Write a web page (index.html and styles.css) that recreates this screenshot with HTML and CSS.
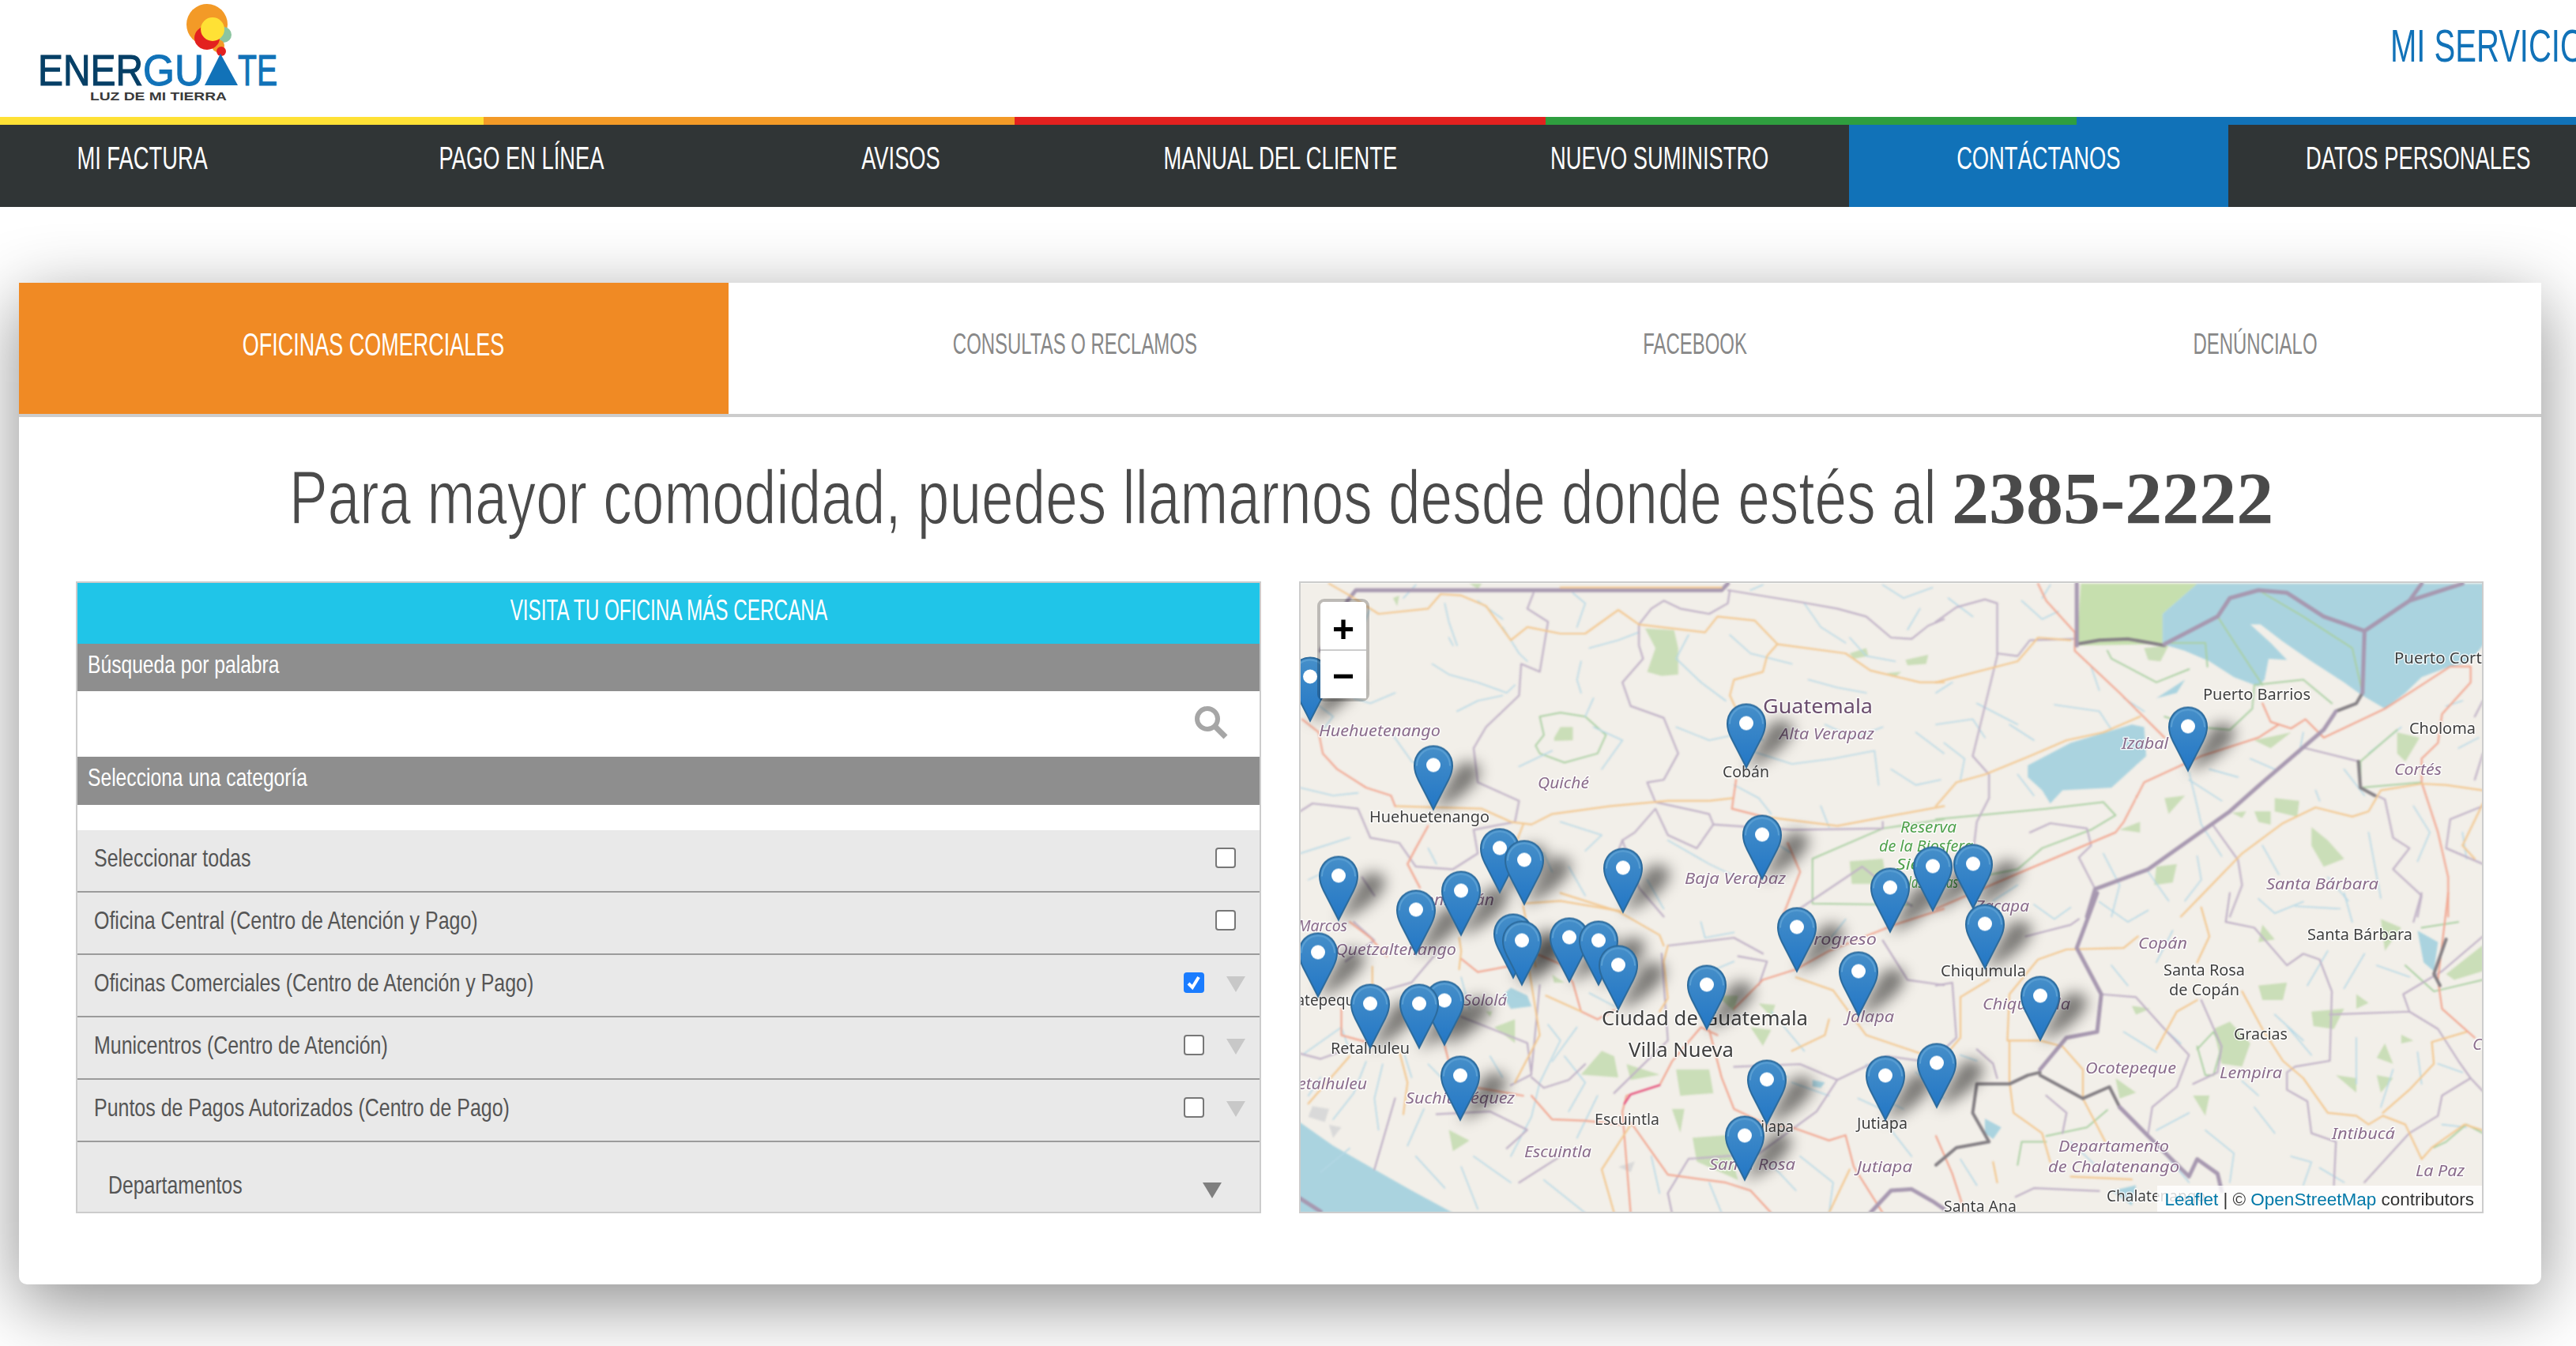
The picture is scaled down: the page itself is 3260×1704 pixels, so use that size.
FILE: index.html
```html
<!DOCTYPE html>
<html lang="es">
<head>
<meta charset="utf-8">
<title>Energuate - Contáctanos</title>
<link rel="stylesheet" href="styles.css">
</head>
<body>
<header class="top">
  <svg class="logo" viewBox="51 0 310 148" width="310" height="148" role="img" aria-label="Energuate">
    <ellipse cx="262" cy="31" rx="26" ry="26" fill="#f39a27"/>
    <ellipse cx="283" cy="44" rx="10" ry="10" fill="#8cc5a0"/>
    <ellipse cx="276" cy="58" rx="8" ry="8" fill="#f39a27"/>
    <ellipse cx="262" cy="48" rx="16" ry="15" fill="#e3211f"/>
    <ellipse cx="269" cy="37" rx="15" ry="15" fill="#ffe135"/>
    <ellipse cx="280" cy="65" rx="6" ry="6" fill="#e3211f"/>
    <text class="logo-a" x="48" y="108" textLength="133" lengthAdjust="spacingAndGlyphs">ENER</text>
    <text class="logo-b" x="181" y="108" textLength="77" lengthAdjust="spacingAndGlyphs">GU</text>
    <polygon points="279,68 259,108 301,108" fill="#1172b8"/>
    <text class="logo-b" x="301" y="108" textLength="50" lengthAdjust="spacingAndGlyphs">TE</text>
    <text class="logo-c" x="114" y="127" textLength="173" lengthAdjust="spacingAndGlyphs">LUZ DE MI TIERRA</text>
  </svg>
  <span class="service"><span class="cond">MI SERVICIOS</span></span>
</header>

<div class="strip">
  <i class="s-yellow"></i><i class="s-orange"></i><i class="s-red"></i><i class="s-green"></i><i class="s-blue"></i>
</div>
<nav class="nav">
  <a class="nav-item"><span class="cond center">MI FACTURA</span></a>
  <a class="nav-item"><span class="cond center">PAGO EN LÍNEA</span></a>
  <a class="nav-item"><span class="cond center">AVISOS</span></a>
  <a class="nav-item"><span class="cond center">MANUAL DEL CLIENTE</span></a>
  <a class="nav-item"><span class="cond center">NUEVO SUMINISTRO</span></a>
  <a class="nav-item active"><span class="cond center">CONTÁCTANOS</span></a>
  <a class="nav-item"><span class="cond center">DATOS PERSONALES</span></a>
</nav>

<main class="panel">
  <div class="tabs">
    <a class="tab tab-1"><span class="cond center">OFICINAS COMERCIALES</span></a>
    <a class="tab tab-2"><span class="cond center">CONSULTAS O RECLAMOS</span></a>
    <a class="tab tab-3"><span class="cond center">FACEBOOK</span></a>
    <a class="tab tab-4"><span class="cond center">DENÚNCIALO</span></a>
  </div>

  <h1 class="headline"><span class="lead-box"><span class="lead cond">Para mayor comodidad, puedes llamarnos desde donde estés al</span></span><b class="phone">2385-2222</b></h1>

  <div class="content">
    <section class="side">
      <div class="side-title"><span class="cond center">VISITA TU OFICINA MÁS CERCANA</span></div>
      <div class="side-label l-a"><span class="cond">Búsqueda por palabra</span></div>
      <div class="search">
        <input class="search-input" type="text" aria-label="Búsqueda por palabra">
        <svg class="search-icon" viewBox="0 0 46 46" width="46" height="46"><circle cx="19" cy="19" r="13" fill="none" stroke="#a6a6a6" stroke-width="6"/><path d="M28 28 L42 42" stroke="#a6a6a6" stroke-width="7" fill="none"/></svg>
      </div>
      <div class="side-label l-b"><span class="cond">Selecciona una categoría</span></div>
      <div class="gap"></div>
      <div class="row"><span class="cond">Seleccionar todas</span><span class="cb"></span></div>
      <div class="row"><span class="cond">Oficina Central (Centro de Atención y Pago)</span><span class="cb"></span></div>
      <div class="row has-tri"><span class="cond">Oficinas Comerciales (Centro de Atención y Pago)</span><span class="cb on"><svg viewBox="0 0 26 26" width="26" height="26"><path d="M6 14 L11 19 L19 6" fill="none" stroke="#fff" stroke-width="4"/></svg></span><span class="tri"></span></div>
      <div class="row has-tri"><span class="cond">Municentros (Centro de Atención)</span><span class="cb"></span><span class="tri"></span></div>
      <div class="row has-tri"><span class="cond">Puntos de Pagos Autorizados (Centro de Pago)</span><span class="cb"></span><span class="tri"></span></div>
      <div class="row-last"><span class="cond">Departamentos</span><span class="tri dark"></span></div>
    </section>

    <section class="map">
      <svg class="map-svg" viewBox="1646 738 1495 795" width="1495" height="796">
        <defs>
          <linearGradient id="pg" x1="0" y1="0" x2="0" y2="1"><stop offset="0" stop-color="#468fc9"/><stop offset="1" stop-color="#2377c6"/></linearGradient>
          <symbol id="pin" viewBox="0 0 50 82" overflow="visible">
            <path d="M25 1 C11 1 1 12 1 26 C1 33 3 38 6 44 L25 81 L44 44 C47 38 49 33 49 26 C49 12 39 1 25 1 Z" fill="url(#pg)" stroke="#2b6a9c" stroke-width="2"/>
            <path d="M25 4 C13 4 4 14 4 26" fill="none" stroke="#5a9fd3" stroke-width="2"/>
            <path d="M25 4 C37 4 46 14 46 26" fill="none" stroke="#5a9fd3" stroke-width="2"/>
            <circle cx="25" cy="25" r="9" fill="#fff"/>
          </symbol>
          <symbol id="sh" viewBox="0 -70 70 72" overflow="visible">
            <path d="M0 0 L28 -52 C36 -66 64 -62 58 -44 C52 -28 22 -6 0 0 Z" fill="#000" fill-opacity=".5"/>
          </symbol>
        </defs>

        <rect x="1646" y="738" width="1495" height="796" fill="#f2efe9"/>

        <g class="tiles">
          <!-- north-west quadrant -->
          <g transform="translate(1640 720) scale(.523 .3333)">
            <path class="wood" d="M845 225 L915 232 L925 300 L925 400 L885 405 L850 390 L870 300 Z"/>
            <path class="wood" d="M625 640 L640 600 L670 600 L670 650 L625 652 Z"/>
            <path class="wood" d="M1340 320 L1380 300 L1385 330 L1350 340 Z M1475 345 L1530 325 L1525 360 L1480 365 Z M1430 395 L1465 390 L1450 410 Z M235 110 L250 100 L245 140 Z M420 55 L450 55 L440 75 Z M1340 1110 L1420 1100 L1430 1195 L1345 1195 Z"/>
            <path class="prot" d="M590 560 L640 545 L700 560 L750 630 L730 700 L650 735 L590 700 L580 670 L600 630 Z"/>
            <path class="prot" d="M1568 950 L1420 985 L1250 1100 L1250 1270 L1490 1275"/>
            <path class="riv" d="M330 360 L370 400 L440 430 L510 470 L530 440 M240 470 L180 510 L140 490 M390 540 L440 500 L500 480 M690 350 L680 420 L690 470 M720 490 L700 560 M540 750 L620 690 M740 760 L790 650 L720 600 M920 600 L1000 650 L1060 630 M1200 740 L1300 720 L1400 690 L1410 820 M1240 420 L1310 450 L1380 470 M1270 900 L1290 980 M260 110 L290 60 M370 260 L380 290 M500 220 L540 320 L560 350 M710 300 L780 270 L830 240 M950 250 L920 340 L980 430 L1040 500 M1060 820 L1120 870 L1150 930 M1420 60 L1470 110 L1540 70 M1340 260 L1380 330 L1450 350 M1100 690 L1200 740 M1500 620 L1568 700 M700 1070 L740 1010 L640 960 M130 1020 L50 1060 L10 1080 M320 1060 L340 1120 M900 1030 L1000 1120 L1080 1180 M10 830 L90 860 L150 850 M1100 80 L1130 60 M660 1130 L700 1240 M850 1180 L890 1290 M180 150 L150 260 L100 330 M360 130 L370 200 L390 290 M670 90 L700 130 L680 220 M1050 250 L1100 320 L1200 360 M1230 130 L1270 220 L1330 280 M1510 150 L1480 230 M40 500 L90 560 L60 620 M230 620 L280 730 L340 770 M440 120 L500 190 M1280 590 L1350 640 L1420 600 M1090 610 L1130 650 M1440 760 L1500 820 L1560 800 M1120 1000 L1200 1080 M480 1010 L600 1080 L620 1150 M30 1180 L110 1120"/>
            <path class="dep" d="M1045 80 L1220 125 L1310 150 L1380 180 L1440 260 L1490 265 L1530 215 L1568 190"/>
            <path class="dep" d="M1050 80 L1045 130 L1000 170 L930 150 L890 120 L860 150 L830 210 L830 290 L840 340 L790 430 L810 520 L890 565 L925 700 L890 800 L850 810 L870 885 L1000 930 L1010 970 L970 1060 L900 1010 L870 910 L820 1000 L790 1030 L780 1070"/>
            <path class="dep" d="M575 90 L560 150 L610 200 L590 390 L545 360 L540 480 L460 600 L430 680 L440 810 L540 880 L530 960 L430 990 L440 1080 L380 1140 L290 1130 L250 1040 L180 1020 L150 910 L40 890 L10 920"/>
            <path class="dep" d="M1010 970 L1200 990 L1420 985 L1420 960 M790 1030 L830 1210 L890 1320 M160 1170 L190 1240 M1200 1310 L1370 1130 L1490 1280"/>
            <path class="nat" d="M125 120 L145 80 L1030 80 L1045 55 M125 120 L60 310"/>
            <path class="rdo" d="M80 55 L130 100 L200 170 L320 150 L350 95 L400 100 L460 140 L520 270 L560 220 L640 245 L700 245 L780 155 L830 210 L990 240 L1020 180 L1110 195 L1165 285 L1330 320 L1390 385 L1510 430 L1568 430"/>
            <path class="rdo" d="M1165 285 L1140 330 L1130 390 L1060 420 L1050 480 L1065 530"/>
            <path class="rdo" d="M240 900 L450 910 L520 960 L570 970 L620 930 L760 900 L900 880 L1000 880 L1055 870 M1130 940 L1310 975 L1430 940 L1568 900 M640 70 L1030 70 M550 970 L520 1090 M550 1270 L640 1260 L790 1300"/>
            <path class="rdr" d="M15 570 L55 620 L65 700 L100 760 L170 830 L230 860 L240 900"/>
            <path class="rdr" d="M1065 800 L1055 910 L1130 940 M320 975 L290 1060 L270 1120 L300 1210 M1190 1040 L1220 1150 L1180 1310"/>
          </g>
          <!-- south-west quadrant -->
          <g transform="translate(1640 1130) scale(.523 .3333)">
            <path class="wat" d="M0 860 L90 960 L190 1050 L280 1130 L380 1215 L0 1215 Z"/>
            <path class="wat" d="M520 360 L560 390 L570 430 L520 440 L500 390 Z M1250 710 L1280 720 L1270 740 L1250 735 Z"/>
            <path class="wood" d="M740 600 L770 620 L780 700 L690 690 Z M800 650 L880 690 L810 710 Z M920 670 L1000 670 L1010 760 L930 770 Z M960 930 L1040 920 L1070 1090 L970 1020 Z M480 510 L530 480 L530 570 Z M1020 390 L1070 390 L1060 450 Z M1120 420 L1160 425 L1150 470 Z M1100 510 L1150 520 L1130 580 Z M460 450 L475 450 L470 470 Z M620 310 L650 340 L625 340 Z M910 820 L940 820 L930 910 Z M370 900 L420 940 L380 980 Z"/>
            <path class="rock" d="M40 810 L80 820 L70 870 L30 850 Z M80 880 L110 890 L90 930 Z M780 1040 L820 1020 L810 1060 Z"/>
            <path class="riv" d="M20 610 L110 510 L130 600 M170 640 L140 760 L90 860 M260 600 L280 700 M320 650 L370 730 M610 500 L640 560 L590 720 L570 850 L520 1000 M680 510 L620 640 M430 1000 L520 1100 M290 1000 L360 1120 M400 1040 L440 1200 M600 1090 L700 1215 M860 1000 L880 1140 M980 110 L990 170 L1060 150 M1150 450 L1230 600 M1200 720 L1290 770 M1360 780 L1430 830 M1500 680 L1568 780 M1220 1000 L1300 1100 L1290 1215 M1000 1100 L1030 1215 M130 970 L60 1060 M710 380 L770 430 M400 320 L420 440 M210 650 L190 780 L200 900 M310 820 L270 960 M470 620 L500 700 M650 620 L700 720 L660 830 M730 770 L680 930 M1130 640 L1190 700 M1380 650 L1400 770 L1470 820 M1150 1030 L1210 1130 M1440 900 L1490 1000 M60 700 L30 770 M1060 260 L1000 300 L1010 380 M1330 100 L1290 180"/>
            <path class="dep" d="M10 610 L60 630 L130 590 M400 470 L560 570 L570 690 L520 730 M240 780 L190 1050 M340 840 L470 830 L560 900 L510 970 M590 350 L570 680 M900 200 L1060 170 L1130 230 M885 230 L900 560 L770 760 M700 650 L660 710 L600 740 L570 700 M1060 660 L1220 650 L1310 710 L1430 620 L1568 650 M1310 710 L1260 830 L1120 990 L950 1010 L900 1140 L910 1215 M1420 180 L1480 330 L1568 350 M140 110 L190 180 L120 260 M350 210 L280 340 L190 380 M1070 240 L1140 260 L1120 350 M540 1100 L640 1000"/>
            <path class="rdr" d="M400 250 L440 300 L510 280 L580 230 L640 270 L670 340 L690 450 L730 480 L770 445 M1020 540 L980 510 L910 640 L880 730 L800 770 L790 830 L810 1215 M810 870 L900 1070 L1040 1100 L1100 1130 L1150 1215 M1000 520 L1030 700 L1060 820 L1140 880 L1200 890 L1290 940 L1330 920 L1350 1040 L1420 1215 M1060 440 L1130 330 L1210 290 L1290 220 L1450 120 L1568 60 M570 770 L620 860 L700 865 L790 880 M440 740 L550 770 M110 440 L110 540 L180 570 M130 110 L180 170 L220 240 M360 580 L370 640"/>
            <path class="rdo" d="M550 50 L580 280 M395 170 L400 220 L395 290 M185 280 L185 350 M605 390 L690 450 M900 200 L890 260 L900 400 L880 450 M1210 320 L1300 370 L1380 540 L1568 640 M1200 600 L1280 540 L1290 480 M770 1215 L740 1050 L810 880 M1290 1215 L1340 1050 M560 250 L590 540 L530 720 M130 620 L30 800 M250 600 L270 720 L260 840 M640 0 L780 70 L880 160 L890 200"/>
            <path class="pink" d="M795 800 L810 765 L880 730"/>
            <path class="nat" d="M1390 1215 L1440 1130 L1490 1125 L1540 1170 L1568 1200 M10 1160 L60 1210"/>
          </g>
          <!-- north-east quadrant -->
          <g transform="translate(2450 720) scale(.5165 .3333)">
            <path class="wood-l" d="M355 55 L640 55 L555 170 L555 285 L345 290 Z"/>
            <path class="wat" d="M640 55 L555 170 L555 285 L610 310 L670 350 L730 410 L790 445 L805 420 L815 340 L860 345 L820 280 L770 210 L795 210 L850 275 L920 350 L1000 430 L1040 475 L1100 530 L1150 470 L1190 410 L1250 375 L1310 350 L1342 285 L1342 55 Z"/>
            <path class="wat" d="M225 745 L330 660 L480 590 L510 600 L515 710 L430 830 L310 840 L280 890 L260 840 L225 790 Z M540 490 L610 420 L590 470 Z"/>
            <path class="wood" d="M830 870 L890 880 L885 940 L830 920 Z M780 920 L820 920 L820 970 L790 960 Z M725 925 L760 920 L750 945 Z M920 980 L960 1030 L1000 1100 L950 1130 L920 1050 Z M1130 620 L1185 640 L1150 730 L1130 700 Z M540 1130 L590 1120 L580 1190 L535 1200 Z M510 300 L570 290 L550 350 L520 345 Z M780 650 L870 620 L820 680 Z M500 960 L450 990 L500 1000 Z M560 870 L610 860 L570 930 Z"/>
            <path class="riv" d="M0 470 L40 430 M100 510 L200 590 M0 590 L90 570 L120 640 M180 590 L240 650 M290 515 L400 540 L430 610 M460 490 L510 540 M620 770 L640 900 L650 970 L700 1090 M620 800 L700 880 M670 760 L740 790 M770 720 L830 760 M520 1150 L570 1260 M410 1080 L450 1200 L430 1320 M640 1090 L650 1180 L610 1260 M930 840 L940 880 M1140 600 L1060 700 M1290 1000 L1300 1100 M1060 1000 L1090 1250 M880 1280 L990 1290 M140 1260 L200 1200 M1250 520 L1290 500 M280 60 L260 110 M900 620 L890 700 M30 110 L90 180 M210 120 L260 190 L300 160 M20 660 L70 720 L60 800 M380 370 L400 460 M200 780 L240 860 M800 1050 L840 1160 M960 1170 L1010 1260 M1000 760 L1050 860 M1170 900 L1210 1000 L1180 1110 M1280 680 L1330 640"/>
            <path class="prot" d="M690 180 L740 300 L800 440 M790 80 L900 180 L1020 300 L1045 470 M560 280 L660 280 L665 370 M420 310 L430 340 L540 430 L620 380 M560 560 L640 600 L720 610 L775 530 L780 440 L900 420 L970 510 M0 950 L270 910 L410 885 L440 935 L380 990 L260 1060 L230 1100 L200 1140 L100 1170 M1040 730 L1040 830 L1190 810 M1130 610 L1040 730"/>
            <path class="dep" d="M150 130 L150 330 L90 710 L130 780 L130 870 L100 960 L90 1090 M230 1000 L280 965 L370 985 L380 1050 L350 1095 L390 1215 M680 975 L740 1105 L750 1200 L720 1320 M905 680 L1035 730 L1040 830 L1100 875 L1120 1020 L1160 1060 L1120 1140 L1190 1240 L1180 1320 M0 200 L50 145 L120 115 L150 130 M150 320 L200 330 L230 270 L340 265 M1340 500 L1320 560 M1340 700 L1320 800 M1340 900 L1260 950 L1250 1060 L1340 1120"/>
            <path class="rdr" d="M250 55 L270 120 L340 240 L340 310 L450 470 L560 640 M840 590 L790 640 L650 710 L510 810 L460 960 L440 1000 L210 1150 L0 1290 M800 510 L820 580 L870 605 L905 570 L950 640 L1100 530 L1150 480 L1260 370 L1310 370 L1310 430 L1240 550 L1230 660 L1190 720 L1190 810 L1230 1000 L1255 1170 L1255 1320"/>
            <path class="rdo" d="M0 430 L200 350 L250 260 L330 270 M0 900 L50 810 L120 780 L230 710 L320 650 L410 620 L500 560 M1340 840 L1250 820 L1190 815 L1090 840 L1060 920 L1020 940 L930 905 L850 965 L750 1080 L650 1240 L600 1320 M1340 890 L1290 1050 L1320 1100"/>
            <path class="dark" d="M345 285 L400 270 L470 265 L560 290 M1045 470 L1030 510 L980 540 M1035 730 L1040 830 L1075 860"/>
            <path class="nat" d="M345 55 L345 290 M560 285 L690 180 L720 110 L790 80 L860 90 L950 180 L1050 235 L1160 120 L1190 55 M1160 120 L1290 55 M1050 235 L1045 470 M980 540 L950 610 L800 810 L720 920 L520 1140 L390 1215 L370 1320"/>
          </g>
          <!-- south-east quadrant -->
          <g transform="translate(2450 1130) scale(.5165 .3663)">
            <path class="wat" d="M1180 130 L1230 170 L1220 270 L1195 240 Z M120 780 L160 810 L140 850 L120 830 Z M430 1030 L490 1010 L480 1080 Z"/>
            <path class="wood" d="M680 470 L720 445 L770 520 L750 600 L700 590 Z M790 320 L860 310 L850 370 L800 370 Z M920 410 L1000 400 L975 470 L925 460 Z M1250 280 L1340 180 L1340 270 L1270 300 Z M1090 90 L1140 120 L1100 200 Z M1030 350 L1060 380 L1030 400 Z M980 630 L1030 640 L1030 690 Z M1080 630 L1120 640 L1090 690 Z M1100 520 L1120 590 L1080 570 Z M630 700 L670 700 L660 770 Z M480 390 L525 400 L490 420 Z M1140 490 L1170 510 L1140 520 Z M440 640 L490 690 L450 710 Z M800 110 L830 160 L790 170 Z"/>
            <path class="riv" d="M400 30 L470 100 L520 60 M430 250 L470 320 M460 480 L540 550 M560 470 L600 520 M780 740 L830 830 M660 820 L730 900 L720 1000 M540 820 L620 760 M870 910 L920 930 L900 1010 M1030 500 L1030 660 M1050 210 L1000 330 M790 20 L830 70 L900 30 M1000 0 L1020 100 M1180 550 L1190 660 M1240 800 L1300 810 M1080 250 L1160 290 M830 420 L900 510 M1230 590 L1290 620 M60 560 L100 580 M60 920 L100 1010 M960 200 L910 320 M240 40 L290 90 L330 50 M580 130 L540 240 M860 460 L920 560 M1120 610 L1090 740 M750 650 L790 700 M330 860 L390 940 M940 950 L1000 1000 M210 400 L270 450 M560 900 L620 1000"/>
            <path class="prot" d="M640 540 L680 480 L700 530 L680 630 L660 630 L640 530 M1150 250 L1220 340 L1340 300 M1190 120 L1280 100 M270 860 L210 860 L200 940 M270 840 L370 810 L420 750 M1340 830 L1300 800 L1250 860 L1220 880"/>
            <path class="dep" d="M710 100 L780 120 L860 250 L900 210 L940 230 L970 340 L965 580 L880 600 L860 620 L860 680 L910 720 L920 830 L980 860 L975 1010 M965 420 L1160 410 L1230 470 L1280 580 L1310 640 L1240 700 L1230 770 L1160 830 L1050 1000 M1160 410 L1145 350 L1240 270 L1340 150 M405 350 L490 360 L560 470 L620 560 L590 670 L530 740 L520 830 M1310 640 L1340 685 M630 660 L690 620 L700 530 L650 370 M220 150 L330 110 L350 90 M0 320 L40 310 L50 500 L20 540 M100 540 L140 590 L150 640 M195 1050 L240 1020 L400 1030 M270 700 L320 760 L310 830 M710 100 L720 0 M1190 0 L1170 100"/>
            <path class="rdo" d="M650 50 L670 150 L640 240 M495 150 L460 190 L320 195 L250 230 L180 350 L175 510 L255 510 L310 530 L360 610 L360 710 L415 860 M180 510 L180 650 L190 760 L260 830 L280 930 M640 370 L590 410 L540 540 M750 340 L800 470 L850 580 L900 640 L960 760 L1030 770 L1060 800 L1095 770 L1150 800 L1190 920 L1215 880 L1295 800 L1340 820 M1095 760 L1160 680 L1220 590 L1215 515 L1300 480 M60 360 L130 300 M330 980 L480 990 M140 930 L150 1000 M60 360 L60 500 L0 600"/>
            <path class="rdr" d="M1255 0 L1230 300 L1240 400 L1320 500 M0 840 L40 970 L70 1100"/>
            <path class="dark" d="M255 620 L225 630 L180 660 L100 660 L90 760 L130 860 L50 880 L0 940 M255 630 L360 710 L425 670 L450 740 M1250 160 L1220 280 L1235 320"/>
            <path class="nat" d="M395 0 L345 190 L405 350 L395 480 L320 500 L255 610 M450 740 L520 840 L620 980 L640 920 L690 970 L700 1030"/>
          </g>
        </g>

        <g class="labels">
          <text class="lc big" x="2231" y="902" textLength="139" lengthAdjust="spacingAndGlyphs">Guatemala</text>
          <text class="li" x="2252" y="935" textLength="120" lengthAdjust="spacingAndGlyphs">Alta Verapaz</text>
          <text class="li" x="1669" y="931" textLength="154" lengthAdjust="spacingAndGlyphs">Huehuetenango</text>
          <text class="lr" x="1733" y="1040" textLength="152" lengthAdjust="spacingAndGlyphs">Huehuetenango</text>
          <text class="li" x="1946" y="997" textLength="65" lengthAdjust="spacingAndGlyphs">Quiché</text>
          <text class="lr" x="2180" y="983" textLength="59" lengthAdjust="spacingAndGlyphs">Cobán</text>
          <text class="lg" x="2405" y="1053" textLength="71" lengthAdjust="spacingAndGlyphs">Reserva</text>
          <text class="lg" x="2378" y="1077" textLength="119" lengthAdjust="spacingAndGlyphs">de la Biosfera</text>
          <text class="lg" x="2400" y="1100" textLength="60" lengthAdjust="spacingAndGlyphs">Sierra</text>
          <text class="lg" x="2395" y="1123" textLength="83" lengthAdjust="spacingAndGlyphs">de las Minas</text>
          <text class="li" x="2132" y="1118" textLength="128" lengthAdjust="spacingAndGlyphs">Baja Verapaz</text>
          <text class="li" x="1775" y="1145" textLength="116" lengthAdjust="spacingAndGlyphs">Totonicapán</text>
          <text class="li" x="1605" y="1178" textLength="100" lengthAdjust="spacingAndGlyphs">San Marcos</text>
          <text class="li" x="1690" y="1208" textLength="153" lengthAdjust="spacingAndGlyphs">Quetzaltenango</text>
          <text class="li" x="2282" y="1195" textLength="93" lengthAdjust="spacingAndGlyphs">Progreso</text>
          <text class="lr" x="1617" y="1272" textLength="108" lengthAdjust="spacingAndGlyphs">Coatepeque</text>
          <text class="li" x="1852" y="1272" textLength="55" lengthAdjust="spacingAndGlyphs">Sololá</text>
          <text class="lr" x="1684" y="1333" textLength="100" lengthAdjust="spacingAndGlyphs">Retalhuleu</text>
          <text class="li" x="1630" y="1378" textLength="100" lengthAdjust="spacingAndGlyphs">Retalhuleu</text>
          <text class="li" x="1779" y="1396" textLength="138" lengthAdjust="spacingAndGlyphs">Suchitepéquez</text>
          <text class="lr xl" x="2027" y="1297" textLength="261" lengthAdjust="spacingAndGlyphs">Ciudad de Guatemala</text>
          <text class="lr xl" x="2061" y="1337" textLength="133" lengthAdjust="spacingAndGlyphs">Villa Nueva</text>
          <text class="li" x="2336" y="1293" textLength="61" lengthAdjust="spacingAndGlyphs">Jalapa</text>
          <text class="lr" x="2018" y="1423" textLength="82" lengthAdjust="spacingAndGlyphs">Escuintla</text>
          <text class="li" x="1929" y="1464" textLength="85" lengthAdjust="spacingAndGlyphs">Escuintla</text>
          <text class="lr" x="2205" y="1432" textLength="65" lengthAdjust="spacingAndGlyphs">Cuilapa</text>
          <text class="li" x="2163" y="1480" textLength="109" lengthAdjust="spacingAndGlyphs">Santa Rosa</text>
          <text class="lr" x="2350" y="1428" textLength="64" lengthAdjust="spacingAndGlyphs">Jutiapa</text>
          <text class="li" x="2350" y="1483" textLength="70" lengthAdjust="spacingAndGlyphs">Jutiapa</text>
          <text class="lr" x="3030" y="839" textLength="132" lengthAdjust="spacingAndGlyphs">Puerto Cortés</text>
          <text class="lr" x="2788" y="885" textLength="136" lengthAdjust="spacingAndGlyphs">Puerto Barrios</text>
          <text class="lr" x="3049" y="928" textLength="84" lengthAdjust="spacingAndGlyphs">Choloma</text>
          <text class="li" x="2685" y="947" textLength="59" lengthAdjust="spacingAndGlyphs">Izabal</text>
          <text class="li" x="3030" y="980" textLength="60" lengthAdjust="spacingAndGlyphs">Cortés</text>
          <text class="li" x="2868" y="1125" textLength="142" lengthAdjust="spacingAndGlyphs">Santa Bárbara</text>
          <text class="li" x="2500" y="1153" textLength="68" lengthAdjust="spacingAndGlyphs">Zacapa</text>
          <text class="lr" x="2920" y="1189" textLength="133" lengthAdjust="spacingAndGlyphs">Santa Bárbara</text>
          <text class="li" x="2706" y="1200" textLength="62" lengthAdjust="spacingAndGlyphs">Copán</text>
          <text class="lr" x="2738" y="1234" textLength="103" lengthAdjust="spacingAndGlyphs">Santa Rosa</text>
          <text class="lr" x="2745" y="1259" textLength="89" lengthAdjust="spacingAndGlyphs">de Copán</text>
          <text class="lr" x="2456" y="1235" textLength="108" lengthAdjust="spacingAndGlyphs">Chiquimula</text>
          <text class="li" x="2509" y="1277" textLength="111" lengthAdjust="spacingAndGlyphs">Chiquimula</text>
          <text class="lr" x="2827" y="1315" textLength="68" lengthAdjust="spacingAndGlyphs">Gracias</text>
          <text class="li" x="2639" y="1358" textLength="115" lengthAdjust="spacingAndGlyphs">Ocotepeque</text>
          <text class="li" x="2809" y="1364" textLength="79" lengthAdjust="spacingAndGlyphs">Lempira</text>
          <text class="li" x="2951" y="1441" textLength="80" lengthAdjust="spacingAndGlyphs">Intibucá</text>
          <text class="li" x="2605" y="1457" textLength="140" lengthAdjust="spacingAndGlyphs">Departamento</text>
          <text class="li" x="2592" y="1483" textLength="166" lengthAdjust="spacingAndGlyphs">de Chalatenango</text>
          <text class="li" x="3057" y="1488" textLength="62" lengthAdjust="spacingAndGlyphs">La Paz</text>
          <text class="lr" x="2666" y="1520" textLength="125" lengthAdjust="spacingAndGlyphs">Chalatenango</text>
          <text class="lr" x="2460" y="1533" textLength="92" lengthAdjust="spacingAndGlyphs">Santa Ana</text>
          <text class="li" x="3129" y="1328" textLength="110" lengthAdjust="spacingAndGlyphs">Comayagua</text>
        </g>

        <g class="shadows">
          <use href="#sh" x="1658" y="843" width="70" height="72"/><use href="#sh" x="2769" y="906" width="70" height="72"/>
          <use href="#sh" x="2210" y="902" width="70" height="72"/><use href="#sh" x="1814" y="955" width="70" height="72"/>
          <use href="#sh" x="2230" y="1043" width="70" height="72"/><use href="#sh" x="1898" y="1060" width="70" height="72"/>
          <use href="#sh" x="1929" y="1075" width="70" height="72"/><use href="#sh" x="2446" y="1083" width="70" height="72"/>
          <use href="#sh" x="2497" y="1080" width="70" height="72"/><use href="#sh" x="2054" y="1085" width="70" height="72"/>
          <use href="#sh" x="1694" y="1095" width="70" height="72"/><use href="#sh" x="2392" y="1110" width="70" height="72"/>
          <use href="#sh" x="1849" y="1114" width="70" height="72"/><use href="#sh" x="1792" y="1138" width="70" height="72"/>
          <use href="#sh" x="2512" y="1156" width="70" height="72"/><use href="#sh" x="2274" y="1160" width="70" height="72"/>
          <use href="#sh" x="1915" y="1168" width="70" height="72"/><use href="#sh" x="1986" y="1173" width="70" height="72"/>
          <use href="#sh" x="1926" y="1177" width="70" height="72"/><use href="#sh" x="2023" y="1177" width="70" height="72"/>
          <use href="#sh" x="1668" y="1192" width="70" height="72"/><use href="#sh" x="2048" y="1208" width="70" height="72"/>
          <use href="#sh" x="2352" y="1216" width="70" height="72"/><use href="#sh" x="2160" y="1233" width="70" height="72"/>
          <use href="#sh" x="2582" y="1247" width="70" height="72"/><use href="#sh" x="1828" y="1253" width="70" height="72"/>
          <use href="#sh" x="1734" y="1257" width="70" height="72"/><use href="#sh" x="1796" y="1257" width="70" height="72"/>
          <use href="#sh" x="2451" y="1332" width="70" height="72"/><use href="#sh" x="2386" y="1348" width="70" height="72"/>
          <use href="#sh" x="1848" y="1348" width="70" height="72"/><use href="#sh" x="2236" y="1353" width="70" height="72"/>
          <use href="#sh" x="2208" y="1424" width="70" height="72"/>
        </g>

        <g class="pins">
          <use href="#pin" x="1633" y="831" width="50" height="82"/>
          <use href="#pin" x="2744" y="894" width="50" height="82"/>
          <use href="#pin" x="2185" y="890" width="50" height="82"/>
          <use href="#pin" x="1789" y="943" width="50" height="82"/>
          <use href="#pin" x="2205" y="1031" width="50" height="82"/>
          <use href="#pin" x="1873" y="1048" width="50" height="82"/>
          <use href="#pin" x="1904" y="1063" width="50" height="82"/>
          <use href="#pin" x="2472" y="1068" width="50" height="82"/>
          <use href="#pin" x="2421" y="1071" width="50" height="82"/>
          <use href="#pin" x="2029" y="1073" width="50" height="82"/>
          <use href="#pin" x="1669" y="1083" width="50" height="82"/>
          <use href="#pin" x="2367" y="1098" width="50" height="82"/>
          <use href="#pin" x="1824" y="1102" width="50" height="82"/>
          <use href="#pin" x="1767" y="1126" width="50" height="82"/>
          <use href="#pin" x="2487" y="1144" width="50" height="82"/>
          <use href="#pin" x="2249" y="1148" width="50" height="82"/>
          <use href="#pin" x="1890" y="1156" width="50" height="82"/>
          <use href="#pin" x="1961" y="1161" width="50" height="82"/>
          <use href="#pin" x="1901" y="1165" width="50" height="82"/>
          <use href="#pin" x="1998" y="1165" width="50" height="82"/>
          <use href="#pin" x="1643" y="1180" width="50" height="82"/>
          <use href="#pin" x="2023" y="1196" width="50" height="82"/>
          <use href="#pin" x="2327" y="1204" width="50" height="82"/>
          <use href="#pin" x="2135" y="1221" width="50" height="82"/>
          <use href="#pin" x="2557" y="1235" width="50" height="82"/>
          <use href="#pin" x="1803" y="1241" width="50" height="82"/>
          <use href="#pin" x="1709" y="1245" width="50" height="82"/>
          <use href="#pin" x="1771" y="1245" width="50" height="82"/>
          <use href="#pin" x="2426" y="1320" width="50" height="82"/>
          <use href="#pin" x="2361" y="1336" width="50" height="82"/>
          <use href="#pin" x="1823" y="1336" width="50" height="82"/>
          <use href="#pin" x="2211" y="1341" width="50" height="82"/>
          <use href="#pin" x="2183" y="1412" width="50" height="82"/>
        </g>
      </svg>

      <div class="zoom">
        <a class="zoom-btn zoom-in">+</a>
        <a class="zoom-btn">−</a>
      </div>
      <div class="attrib"><a>Leaflet</a> | © <a>OpenStreetMap</a> contributors</div>
    </section>
  </div>
</main>
</body>
</html>
```

FILE: styles.css
```css
* { box-sizing: border-box; }
html, body { margin: 0; height: 1704px; overflow: hidden; }
body { width: 3260px; background: #fff; font-family: "Liberation Sans", Arial, sans-serif; color: #555; }

.cond { display: inline-block; white-space: nowrap; transform-origin: left center; transform: scaleX(var(--sx, .77)); }
.cond.center { transform-origin: center; }

/* header */
.top { height: 148px; display: flex; align-items: center; padding-left: 51px; white-space: nowrap; }
.logo { display: block; flex: none; }
.logo-a, .logo-b { font-family: "Liberation Sans", sans-serif; font-size: 56px; stroke-width: 1.2px; }
.logo-a { fill: #063f66; stroke: #063f66; }
.logo-b { fill: #1172b8; stroke: #1172b8; }
.logo-c { font-family: "Liberation Sans", sans-serif; font-size: 14px; font-weight: 700; fill: #3a3a3a; }
.service { margin-left: 2664px; flex: none; color: #1172b8; font-size: 58px; line-height: 58px; --sx: .69; margin-top: -32px; }

/* nav */
.strip { display: flex; width: 3360px; margin-left: -60px; height: 10px; }
.strip i { flex: 1; }
.s-yellow { background: #ffe135; }
.s-orange { background: #f39a27; }
.s-red { background: #e3211f; }
.s-green { background: #2f9e3f; }
.s-blue { background: #1172b8; }
.nav { display: flex; width: 3360px; margin-left: -60px; height: 104px; background: #303536; }
.nav-item { flex: 0 0 480px; text-align: center; color: #fff; font-size: 40px; line-height: 48px; padding-top: 18px; --sx: .683; }
.nav-item.active { background: #1172b8; }

/* panel */
.panel { width: 3192px; height: 1268px; margin: 96px 0 0 24px; background: #fff; border-radius: 0 0 10px 10px; box-shadow: 0 24px 90px rgba(0,0,0,.45); }
.tabs { display: flex; height: 170px; border-bottom: 4px solid #ccc; }
.tab { display: flex; align-items: center; justify-content: center; height: 166px; color: #888; font-size: 36px; --sx: .665; padding-bottom: 10px; }
.tab-1 { flex: 0 0 898px; background: #f08a24; color: #fff; font-size: 40px; --sx: .675; }
.tab-2 { flex: 0 0 876px; }
.tab-3 { flex: 0 0 694px; }
.tab-4 { flex: 1; }

.headline { margin: 0; height: 208px; display: flex; align-items: center; padding: 0 0 4px 342px; font-weight: 400; color: #4a4a4a; white-space: nowrap; }
.lead-box { flex: 0 0 2104px; min-width: 0; }
.lead { font-size: 96px; --sx: .76; -webkit-text-stroke: 1.5px #fff; }
.phone { font-family: "Liberation Serif", "Times New Roman", serif; font-size: 94px; font-weight: 700; }

.content { display: flex; gap: 48px; padding: 0 73px 0 72px; }

/* side */
.side { flex: 0 0 1500px; height: 800px; border: 2px solid #ccc; background: #fff; }
.side-title { height: 77px; background: #20c5e8; color: #fff; font-size: 36px; text-align: center; line-height: 69px; --sx: .675; }
.side-label { background: #8e8e8e; color: #fff; font-size: 32px; padding-left: 13px; --sx: .77; }
.l-a { height: 60px; line-height: 53px; }
.l-b { height: 61px; line-height: 53px; }
.search { height: 83px; display: flex; align-items: center; padding-right: 39px; }
.search-input { flex: 1; height: 100%; border: 0; outline: 0; background: transparent; }
.search-icon { flex: none; margin-top: -5px; }
.gap { height: 32px; }
.row { height: 79px; display: flex; align-items: center; padding: 0 30px 7px 21px; background: #e9e9e9; border-bottom: 2px solid #9b9b9b; font-size: 32px; color: #555; --sx: .78; }
.row .cond { margin-right: auto; }
.row.has-tri { padding-right: 18px; }
.row.has-tri .cb { margin-right: 28px; }
.cb { flex: none; width: 26px; height: 26px; border: 2px solid #777; border-radius: 4px; background: #fff; }
.cb.on { background: #1a7cff; border: 0; }
.cb svg { display: block; }
.tri { flex: none; width: 0; height: 0; border-style: solid; border-width: 20px 12px 0; border-color: #c8c8c8 transparent transparent; margin-top: 4px; }
.tri.dark { border-top-color: #7f7f7f; margin: 0; }
.row-last { height: 88px; display: flex; align-items: center; padding: 0 48px 0 39px; background: #e9e9e9; font-size: 32px; color: #555; --sx: .775; }
.row-last .cond { margin-right: auto; margin-top: 20px; }
.row-last .tri { margin-top: 34px; }

/* map */
.map { flex: 0 0 1499px; height: 800px; border: 2px solid #ccc; position: relative; overflow: hidden; }
.map-svg { display: block; }
.tiles { filter: blur(.8px); }
.tiles path { fill: none; stroke-linejoin: round; stroke-linecap: round; vector-effect: non-scaling-stroke; }
.tiles .wat { fill: #aad3df; }
.tiles .wood { fill: #c3dbaf; fill-opacity: .85; filter: blur(1.5px); }
.tiles .wood-l { fill: #c6dfae; }
.tiles .rock { fill: #d9d9d9; }
.tiles .riv { stroke: #b5d8e6; stroke-width: 1.6; }
.tiles .dep { stroke: #bfb0c6; stroke-width: 2.2; }
.tiles .nat { stroke: #a798b0; stroke-width: 5; }
.tiles .dark { stroke: #847f84; stroke-width: 4; }
.tiles .rdo { stroke: #f3c78f; stroke-width: 2.2; }
.tiles .rdr { stroke: #f2a690; stroke-width: 2.2; }
.tiles .prot { stroke: #aad0a2; stroke-width: 2; }
.tiles .pink { stroke: #e5517f; stroke-width: 2.4; }
.labels { filter: blur(.35px); font-family: "Noto Sans", "Open Sans", sans-serif; paint-order: stroke; stroke: rgba(255,255,255,.75); stroke-width: 3px; stroke-linejoin: round; }
.labels text { font-size: 20px; }
.labels .lr { fill: #3f3f3f; }
.labels .xl { font-size: 26px; }
.labels .li { fill: #8a6c8c; font-style: italic; }
.labels .lc { fill: #6b4e6e; }
.labels .big { font-size: 26px; }
.labels .lg { fill: #4fa14c; font-style: italic; }
.shadows { filter: blur(9px); }

.zoom { position: absolute; left: 21px; top: 20px; width: 66px; border: 4px solid rgba(0,0,0,.22); border-radius: 9px; background-clip: padding-box; }
.zoom-btn { display: block; height: 60px; background: #fff; text-align: center; color: #000; font: 700 48px/63px "Liberation Sans", sans-serif; }
.zoom-in { border-bottom: 2px solid #ccc; height: 62px; border-radius: 5px 5px 0 0; line-height: 70px; }
.attrib { position: absolute; right: 0; bottom: 0; height: 33px; padding: 0 10px; background: rgba(255,255,255,.8); color: #333; font-size: 22.5px; line-height: 35px; white-space: nowrap; }
.attrib a { color: #0078a8; }
```
